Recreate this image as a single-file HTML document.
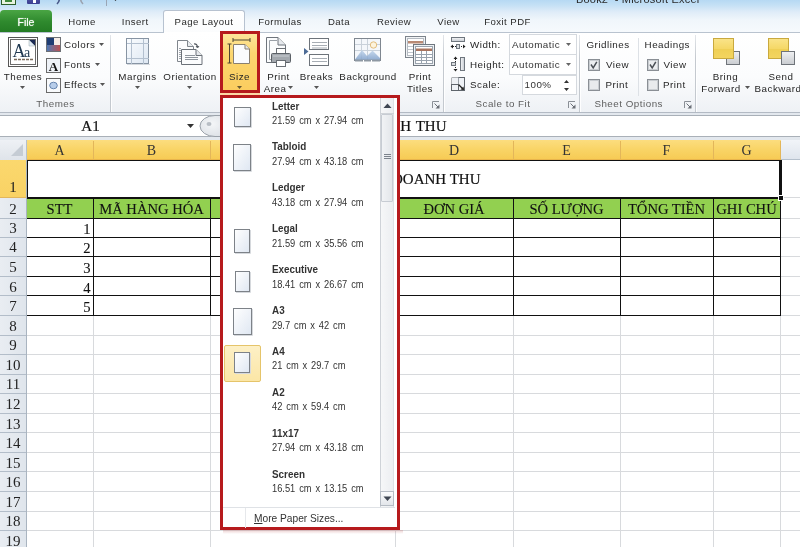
<!DOCTYPE html><html><head><meta charset="utf-8"><style>
html,body{margin:0;padding:0;width:800px;height:547px;overflow:hidden;background:#fff;position:relative}
</style></head><body>
<svg width="0" height="0" style="position:absolute"><defs><linearGradient id="pg" x1="0" y1="0" x2="1" y2="1"><stop offset="0" stop-color="#ffffff"/><stop offset="1" stop-color="#dfe7f2"/></linearGradient></defs></svg>
<div style="position:absolute;left:0;top:0;width:800px;height:547px;overflow:hidden;will-change:transform">
<div style="position:absolute;left:0px;top:0px;width:800px;height:33px;background:linear-gradient(#b6d9f3 0px,#c4e0f5 5px,#dfecf8 12px,#f0f6fb 20px,#f7fafd 33px)"></div><div style="position:absolute;left:1px;top:-6px;width:15px;height:11px;background:#e8f3e0;border:1px solid #2d5f2a;box-sizing:border-box"></div><div style="position:absolute;left:5px;top:-4px;width:7px;height:6px;background:#3e8a3a"></div><div style="position:absolute;left:27px;top:-6px;width:13px;height:10px;background:linear-gradient(#5a5fb0,#3b3f91);border-radius:1px"></div><div style="position:absolute;left:33px;top:0px;width:3px;height:3px;background:#fff"></div><svg style="position:absolute;left:52px;top:-4px" width="10" height="10" viewBox="0 0 10 10"><path d="M6 0 Q9 4 5 8" stroke="#4a5a8a" stroke-width="1.6" fill="none"/></svg><svg style="position:absolute;left:78px;top:-4px" width="10" height="10" viewBox="0 0 10 10"><path d="M4 0 Q1 4 5 8" stroke="#9aa3b0" stroke-width="1.6" fill="none"/></svg><div style="position:absolute;left:106px;top:-2px;width:1px;height:8px;background:#9aa5b5"></div><svg style="position:absolute;left:112px;top:-3px" width="8" height="6" viewBox="0 0 8 6"><path d="M0 0 L7 0 L3.5 4 Z" fill="#222"/></svg><div style="position:absolute;left:576px;top:-11.8px;height:22px;line-height:22px;font-family:'Liberation Sans', sans-serif;font-size:11px;color:#2a2a2a;font-weight:400;white-space:nowrap;letter-spacing:0.2px;">Book2 &nbsp;-&nbsp;Microsoft Excel</div><div style="position:absolute;left:0px;top:10px;width:52px;height:23px;background:linear-gradient(#4aa544,#2f8a2e 50%,#237a23);border-radius:4px 4px 0 0;"></div><div style="position:absolute;left:-124px;top:11.5px;width:300px;height:21.0px;line-height:21.0px;text-align:center;font-family:'Liberation Sans', sans-serif;font-size:10.5px;color:#ffffff;font-weight:400;white-space:nowrap;letter-spacing:0px;text-shadow:0 0 1px #cfe8c8">File</div><div style="position:absolute;left:-68px;top:12.4px;width:300px;height:19.2px;line-height:19.2px;text-align:center;font-family:'Liberation Sans', sans-serif;font-size:9.6px;color:#2a2a2a;font-weight:400;white-space:nowrap;letter-spacing:0.45px;">Home</div><div style="position:absolute;left:-14.800000000000011px;top:12.4px;width:300px;height:19.2px;line-height:19.2px;text-align:center;font-family:'Liberation Sans', sans-serif;font-size:9.6px;color:#2a2a2a;font-weight:400;white-space:nowrap;letter-spacing:0.45px;">Insert</div><div style="position:absolute;left:130px;top:12.4px;width:300px;height:19.2px;line-height:19.2px;text-align:center;font-family:'Liberation Sans', sans-serif;font-size:9.6px;color:#2a2a2a;font-weight:400;white-space:nowrap;letter-spacing:0.45px;">Formulas</div><div style="position:absolute;left:189px;top:12.4px;width:300px;height:19.2px;line-height:19.2px;text-align:center;font-family:'Liberation Sans', sans-serif;font-size:9.6px;color:#2a2a2a;font-weight:400;white-space:nowrap;letter-spacing:0.45px;">Data</div><div style="position:absolute;left:244px;top:12.4px;width:300px;height:19.2px;line-height:19.2px;text-align:center;font-family:'Liberation Sans', sans-serif;font-size:9.6px;color:#2a2a2a;font-weight:400;white-space:nowrap;letter-spacing:0.45px;">Review</div><div style="position:absolute;left:298.5px;top:12.4px;width:300px;height:19.2px;line-height:19.2px;text-align:center;font-family:'Liberation Sans', sans-serif;font-size:9.6px;color:#2a2a2a;font-weight:400;white-space:nowrap;letter-spacing:0.45px;">View</div><div style="position:absolute;left:357.5px;top:12.4px;width:300px;height:19.2px;line-height:19.2px;text-align:center;font-family:'Liberation Sans', sans-serif;font-size:9.6px;color:#2a2a2a;font-weight:400;white-space:nowrap;letter-spacing:0.45px;">Foxit PDF</div><div style="position:absolute;left:163px;top:10px;width:82px;height:24px;background:linear-gradient(#ffffff,#fbfcfd);border:1px solid #b7c2d0;border-bottom:none;border-radius:3px 3px 0 0;box-sizing:border-box"></div><div style="position:absolute;left:54px;top:12.4px;width:300px;height:19.2px;line-height:19.2px;text-align:center;font-family:'Liberation Sans', sans-serif;font-size:9.6px;color:#2a2a2a;font-weight:400;white-space:nowrap;letter-spacing:0.45px;">Page Layout</div><div style="position:absolute;left:0px;top:32px;width:800px;height:81px;background:linear-gradient(#ffffff 0%,#fbfcfd 55%,#eef1f5 100%);border-top:1px solid #b9c3cf;border-bottom:1px solid #b3bac4;box-sizing:border-box"></div><div style="position:absolute;left:164px;top:32px;width:80px;height:2px;background:#fff"></div><div style="position:absolute;left:110px;top:35px;width:1px;height:77px;background:linear-gradient(#e3e6ea,#c4c9cf 30%,#c4c9cf)"></div><div style="position:absolute;left:111px;top:35px;width:1px;height:77px;background:rgba(255,255,255,.9)"></div><div style="position:absolute;left:443px;top:35px;width:1px;height:77px;background:linear-gradient(#e3e6ea,#c4c9cf 30%,#c4c9cf)"></div><div style="position:absolute;left:444px;top:35px;width:1px;height:77px;background:rgba(255,255,255,.9)"></div><div style="position:absolute;left:579px;top:35px;width:1px;height:77px;background:linear-gradient(#e3e6ea,#c4c9cf 30%,#c4c9cf)"></div><div style="position:absolute;left:580px;top:35px;width:1px;height:77px;background:rgba(255,255,255,.9)"></div><div style="position:absolute;left:695px;top:35px;width:1px;height:77px;background:linear-gradient(#e3e6ea,#c4c9cf 30%,#c4c9cf)"></div><div style="position:absolute;left:696px;top:35px;width:1px;height:77px;background:rgba(255,255,255,.9)"></div><svg style="position:absolute;left:8px;top:37px" width="30" height="30" viewBox="0 0 30 30"><rect x="0.5" y="0.5" width="29" height="29" fill="#fff" stroke="#555"/><rect x="2.5" y="2.5" width="25" height="25" fill="#fff" stroke="#6a6a6a"/><path d="M21 3 L27 3 L27 9 Z" fill="#1d2b55"/><path d="M21 3 L21 9 L27 9 Z" fill="#e3ebf5" stroke="#9aa" stroke-width="0.5"/><text x="4.5" y="19.5" font-family="Liberation Serif" font-size="18" fill="#223a52">A</text><text x="16" y="19.5" font-family="Liberation Serif" font-size="14" fill="#223a52">a</text><path d="M6 22.5 h3 M10 22.5 h3 M14 22.5 h3 M18 22.5 h3 M22 22.5 h3" stroke="#7a6a5a" stroke-width="1.5"/></svg><div style="position:absolute;left:-127px;top:66.7px;width:300px;height:19.6px;line-height:19.6px;text-align:center;font-family:'Liberation Sans', sans-serif;font-size:9.8px;color:#262626;font-weight:400;white-space:nowrap;letter-spacing:0.5px;">Themes</div><svg style="position:absolute;left:20px;top:86px" width="6" height="4" viewBox="0 0 6 4"><path d="M0 0 L5 0 L2.5 3 Z" fill="#555"/></svg><svg style="position:absolute;left:46px;top:37px" width="15" height="15" viewBox="0 0 15 15"><defs><linearGradient id="cb" x1="0" y1="0" x2="1" y2="0"><stop offset="0" stop-color="#4a7ab8"/><stop offset="1" stop-color="#c0504d"/></linearGradient></defs><rect x="0.5" y="0.5" width="14" height="14" fill="url(#cb)" stroke="#6d7075"/><rect x="1" y="1" width="7" height="7" fill="#1f3d73"/><rect x="8" y="1" width="6" height="7" fill="#f6ece6"/></svg><div style="position:absolute;left:64px;top:35.0px;height:19.6px;line-height:19.6px;font-family:'Liberation Sans', sans-serif;font-size:9.8px;color:#262626;font-weight:400;white-space:nowrap;letter-spacing:0.5px;">Colors</div><svg style="position:absolute;left:98.5px;top:43px" width="6" height="4" viewBox="0 0 6 4"><path d="M0 0 L5 0 L2.5 3 Z" fill="#555"/></svg><svg style="position:absolute;left:46px;top:58px" width="15" height="15" viewBox="0 0 15 15"><rect x="0.5" y="0.5" width="14" height="14" fill="#eef2f7" stroke="#6a6a6a"/><text x="2.8" y="12.5" font-family="Liberation Serif" font-size="13" font-weight="bold" fill="#111">A</text></svg><div style="position:absolute;left:64px;top:55.2px;height:19.6px;line-height:19.6px;font-family:'Liberation Sans', sans-serif;font-size:9.8px;color:#262626;font-weight:400;white-space:nowrap;letter-spacing:0.5px;">Fonts</div><svg style="position:absolute;left:94.5px;top:63px" width="6" height="4" viewBox="0 0 6 4"><path d="M0 0 L5 0 L2.5 3 Z" fill="#555"/></svg><svg style="position:absolute;left:46px;top:78px" width="15" height="15" viewBox="0 0 15 15"><rect x="0.5" y="0.5" width="14" height="14" fill="#f8fafc" stroke="#6a6a6a"/><ellipse cx="7.5" cy="7.5" rx="3.8" ry="3.3" fill="#b7cdea" stroke="#6786b0"/></svg><div style="position:absolute;left:64px;top:75.2px;height:19.6px;line-height:19.6px;font-family:'Liberation Sans', sans-serif;font-size:9.8px;color:#262626;font-weight:400;white-space:nowrap;letter-spacing:0.5px;">Effects</div><svg style="position:absolute;left:99.5px;top:83px" width="6" height="4" viewBox="0 0 6 4"><path d="M0 0 L5 0 L2.5 3 Z" fill="#555"/></svg><div style="position:absolute;left:-94.5px;top:94.2px;width:300px;height:19.6px;line-height:19.6px;text-align:center;font-family:'Liberation Sans', sans-serif;font-size:9.8px;color:#5e5e5e;font-weight:400;white-space:nowrap;letter-spacing:0.5px;">Themes</div><svg style="position:absolute;left:126px;top:38px" width="24" height="27" viewBox="0 0 24 27"><defs><linearGradient id="mg" x1="0" y1="0" x2="1" y2="1"><stop offset="0" stop-color="#fbfdff"/><stop offset="1" stop-color="#dde7f2"/></linearGradient></defs><rect x="0.5" y="0.5" width="22" height="25" fill="url(#mg)" stroke="#8794a3"/><path d="M5.5 1 V26 M17.5 1 V26 M1 5.5 H23 M1 20.5 H23" stroke="#b3c0cf"/><rect x="1" y="26" width="23" height="1" fill="#d5d9de"/></svg><div style="position:absolute;left:-12.5px;top:66.5px;width:300px;height:19.6px;line-height:19.6px;text-align:center;font-family:'Liberation Sans', sans-serif;font-size:9.8px;color:#262626;font-weight:400;white-space:nowrap;letter-spacing:0.5px;">Margins</div><svg style="position:absolute;left:135px;top:86px" width="6" height="4" viewBox="0 0 6 4"><path d="M0 0 L5 0 L2.5 3 Z" fill="#555"/></svg><svg style="position:absolute;left:176px;top:39px" width="28" height="27" viewBox="0 0 28 27"><path d="M1.5 1.5 H11.5 L17.5 7.5 V22.5 H1.5 Z" fill="#fdfdfe" stroke="#80868d"/><path d="M11.5 1.5 V7.5 H17.5" fill="#e9ecef" stroke="#80868d"/><path d="M3 9.5 H5 M3 11.5 H5 M3 13.5 H5 M3 15.5 H5 M3 17.5 H5 M3 19.5 H5" stroke="#a0a6ad"/><path d="M5.5 10.5 H20 L26 16.5 V25.5 H5.5 Z" fill="#fbfcfd" stroke="#6b7178"/><path d="M20 10.5 V16.5 H26" fill="#e6e9ed" stroke="#6b7178"/><path d="M9 16.5 H19 M9 18.5 H22 M9 20.5 H22" stroke="#8e959d"/><path d="M18 5 Q21 4.5 21.5 8" stroke="#50565d" stroke-width="1.2" fill="none"/><path d="M20 7 L21.5 9 L23 7" stroke="#50565d" fill="none"/></svg><div style="position:absolute;left:40px;top:66.5px;width:300px;height:19.6px;line-height:19.6px;text-align:center;font-family:'Liberation Sans', sans-serif;font-size:9.8px;color:#262626;font-weight:400;white-space:nowrap;letter-spacing:0.5px;">Orientation</div><svg style="position:absolute;left:186.5px;top:86px" width="6" height="4" viewBox="0 0 6 4"><path d="M0 0 L5 0 L2.5 3 Z" fill="#555"/></svg><svg style="position:absolute;left:265px;top:36px" width="28" height="32" viewBox="0 0 28 32"><path d="M1.5 1.5 H13 L20.5 9 V26.5 H1.5 Z" fill="#fbfcfd" stroke="#6f757c"/><path d="M13 1.5 V9 H20.5" fill="#e6e9ed" stroke="#6f757c"/><path d="M4.5 4.5 H12 M4.5 4.5 V23.5 H10" stroke="#9aa0a7" fill="none"/><rect x="11.5" y="12.5" width="9" height="6" fill="#fff" stroke="#6a6f75"/><rect x="6.5" y="17.5" width="19" height="9" rx="1" fill="#a3a8ae" stroke="#5b6066"/><path d="M8 20 H24" stroke="#c9cdd2"/><rect x="11.5" y="24.5" width="9" height="6" fill="#fff" stroke="#6a6f75"/></svg><div style="position:absolute;left:128.5px;top:66.5px;width:300px;height:19.6px;line-height:19.6px;text-align:center;font-family:'Liberation Sans', sans-serif;font-size:9.8px;color:#262626;font-weight:400;white-space:nowrap;letter-spacing:0.5px;">Print</div><div style="position:absolute;left:125px;top:78.8px;width:300px;height:19.6px;line-height:19.6px;text-align:center;font-family:'Liberation Sans', sans-serif;font-size:9.8px;color:#262626;font-weight:400;white-space:nowrap;letter-spacing:0.5px;">Area</div><svg style="position:absolute;left:288px;top:86px" width="6" height="4" viewBox="0 0 6 4"><path d="M0 0 L5 0 L2.5 3 Z" fill="#555"/></svg><svg style="position:absolute;left:301px;top:37px" width="28" height="30" viewBox="0 0 28 30"><path d="M3 11 L7.5 14.5 L3 18 Z" fill="#4d6b96"/><rect x="8.5" y="1.5" width="19" height="11" fill="#fff" stroke="#6d737a"/><path d="M11 5.5 H26 M11 8.5 H26 M11 11 H26" stroke="#a7adb4"/><rect x="8.5" y="17.5" width="19" height="11" fill="#fff" stroke="#6d737a"/><path d="M11 21.5 H26 M11 24.5 H26" stroke="#a7adb4"/></svg><div style="position:absolute;left:166.5px;top:66.5px;width:300px;height:19.6px;line-height:19.6px;text-align:center;font-family:'Liberation Sans', sans-serif;font-size:9.8px;color:#262626;font-weight:400;white-space:nowrap;letter-spacing:0.5px;">Breaks</div><svg style="position:absolute;left:314px;top:86px" width="6" height="4" viewBox="0 0 6 4"><path d="M0 0 L5 0 L2.5 3 Z" fill="#555"/></svg><svg style="position:absolute;left:354px;top:38px" width="28" height="26" viewBox="0 0 28 26"><defs><linearGradient id="bgm" x1="0" y1="0" x2="0" y2="1"><stop offset="0" stop-color="#c2d6ec"/><stop offset="1" stop-color="#7f9fc9"/></linearGradient></defs><rect x="0.5" y="0.5" width="26" height="22" fill="#f4f7fb" stroke="#7f8790"/><path d="M1 6.5 H26 M1 12.5 H26 M7.5 1 V22 M13.5 1 V22" stroke="#c9d1da"/><circle cx="19.5" cy="7" r="3.2" fill="#fdf3dc" stroke="#e2bd7e"/><path d="M1 21.5 L8 12 L13 18 L18.5 12.5 L26 20 V22 H1 Z" fill="url(#bgm)" opacity="0.85"/><path d="M1 22.5 H26" stroke="#8e98a3" stroke-width="2"/><path d="M9.5 22 V24 M17.5 22 V24" stroke="#fff"/></svg><div style="position:absolute;left:218px;top:66.5px;width:300px;height:19.6px;line-height:19.6px;text-align:center;font-family:'Liberation Sans', sans-serif;font-size:9.8px;color:#262626;font-weight:400;white-space:nowrap;letter-spacing:0.5px;">Background</div><svg style="position:absolute;left:405px;top:36px" width="30" height="31" viewBox="0 0 30 31"><rect x="0.5" y="0.5" width="20" height="21" fill="#f2f4f6" stroke="#7d848c"/><rect x="2.5" y="2.5" width="16" height="17" fill="#fff" stroke="#b5bbc2"/><rect x="3" y="5" width="15" height="2.5" fill="#b98a74"/><path d="M3 10.5 H18 M3 13.5 H18 M3 16.5 H18" stroke="#c0c6cd"/><rect x="8.5" y="8.5" width="21" height="21" fill="#eef1f4" stroke="#6f777f"/><rect x="10.5" y="10.5" width="17" height="17" fill="#fff" stroke="#9aa3ad"/><rect x="11" y="12.5" width="16" height="2.5" fill="#a9745e"/><path d="M11 18.5 H27 M11 21.5 H27 M11 24.5 H27 M16.5 15 V27 M21.5 15 V27" stroke="#98a2ad"/></svg><div style="position:absolute;left:270px;top:66.5px;width:300px;height:19.6px;line-height:19.6px;text-align:center;font-family:'Liberation Sans', sans-serif;font-size:9.8px;color:#262626;font-weight:400;white-space:nowrap;letter-spacing:0.5px;">Print</div><div style="position:absolute;left:270px;top:78.8px;width:300px;height:19.6px;line-height:19.6px;text-align:center;font-family:'Liberation Sans', sans-serif;font-size:9.8px;color:#262626;font-weight:400;white-space:nowrap;letter-spacing:0.5px;">Titles</div><svg style="position:absolute;left:432px;top:101px" width="8" height="8" viewBox="0 0 8 8"><path d="M0.5 7 V0.5 H7" stroke="#8a8f96" fill="none"/><path d="M2.5 2.5 L6 6" stroke="#6a6f76" fill="none"/><path d="M7.5 3.5 V7.5 H3.5 Z" fill="#6a6f76"/></svg><svg style="position:absolute;left:450px;top:37px" width="16" height="14" viewBox="0 0 16 14"><defs><linearGradient id="wb" x1="0" y1="0" x2="0" y2="1"><stop offset="0" stop-color="#f7f8fa"/><stop offset="1" stop-color="#c3c8ce"/></linearGradient></defs><rect x="1.5" y="0.5" width="13" height="4" fill="url(#wb)" stroke="#6f767e"/><path d="M1 9.5 H15" stroke="#222" stroke-dasharray="1 1"/><path d="M0.5 9.5 L3 7.5 V11.5 Z M15.5 9.5 L13 7.5 V11.5 Z" fill="#222"/><rect x="6.5" y="7.5" width="3" height="4" fill="#d9dcdf" stroke="#6f767e"/></svg><div style="position:absolute;left:470px;top:35.099999999999994px;height:19.6px;line-height:19.6px;font-family:'Liberation Sans', sans-serif;font-size:9.8px;color:#262626;font-weight:400;white-space:nowrap;letter-spacing:0.5px;">Width:</div><svg style="position:absolute;left:450px;top:56px" width="16" height="16" viewBox="0 0 16 16"><defs><linearGradient id="hb" x1="0" y1="0" x2="1" y2="0"><stop offset="0" stop-color="#f7f8fa"/><stop offset="1" stop-color="#c3c8ce"/></linearGradient></defs><rect x="10.5" y="1.5" width="4" height="13" fill="url(#hb)" stroke="#6f767e"/><path d="M5.5 1 V15" stroke="#222" stroke-dasharray="1 1"/><path d="M5.5 0.5 L3.5 3 H7.5 Z M5.5 15.5 L3.5 13 H7.5 Z" fill="#222"/><rect x="1.5" y="6.5" width="4" height="3" fill="#d9dcdf" stroke="#6f767e"/></svg><div style="position:absolute;left:470px;top:54.8px;height:19.6px;line-height:19.6px;font-family:'Liberation Sans', sans-serif;font-size:9.8px;color:#262626;font-weight:400;white-space:nowrap;letter-spacing:0.5px;">Height:</div><svg style="position:absolute;left:450px;top:76px" width="16" height="16" viewBox="0 0 16 16"><rect x="1.5" y="1.5" width="13" height="13" fill="#eef1f5" stroke="#5f656c"/><path d="M1.5 1.5 H8 M1.5 1.5 V8" stroke="#fff" stroke-dasharray="1 1"/><path d="M1.5 8.5 H8.5 V14.5" stroke="#5f656c" fill="none"/><path d="M8.5 1.5 V8.5" stroke="#9aa0a7"/><path d="M8.5 8.5 L13.5 13.5" stroke="#222" stroke-width="1.2"/><path d="M14 14 L10.5 13.5 L13.5 10.5 Z" fill="#222"/></svg><div style="position:absolute;left:470px;top:75.4px;height:19.6px;line-height:19.6px;font-family:'Liberation Sans', sans-serif;font-size:9.8px;color:#262626;font-weight:400;white-space:nowrap;letter-spacing:0.5px;">Scale:</div><div style="position:absolute;left:509px;top:34px;width:68px;height:21px;background:#fff;border:1px solid #d5d9de;box-sizing:border-box"></div><div style="position:absolute;left:509px;top:54px;width:68px;height:21px;background:#fff;border:1px solid #d5d9de;box-sizing:border-box"></div><div style="position:absolute;left:522px;top:75px;width:55px;height:20px;background:#fff;border:1px solid #d5d9de;box-sizing:border-box"></div><div style="position:absolute;left:512px;top:35.099999999999994px;height:19.6px;line-height:19.6px;font-family:'Liberation Sans', sans-serif;font-size:9.8px;color:#333;font-weight:400;white-space:nowrap;letter-spacing:0.5px;">Automatic</div><div style="position:absolute;left:512px;top:54.8px;height:19.6px;line-height:19.6px;font-family:'Liberation Sans', sans-serif;font-size:9.8px;color:#333;font-weight:400;white-space:nowrap;letter-spacing:0.5px;">Automatic</div><svg style="position:absolute;left:566px;top:43px" width="6" height="4" viewBox="0 0 6 4"><path d="M0 0 L5 0 L2.5 3 Z" fill="#666"/></svg><svg style="position:absolute;left:566px;top:63px" width="6" height="4" viewBox="0 0 6 4"><path d="M0 0 L5 0 L2.5 3 Z" fill="#666"/></svg><div style="position:absolute;left:524.5px;top:75.4px;height:19.6px;line-height:19.6px;font-family:'Liberation Sans', sans-serif;font-size:9.8px;color:#333;font-weight:400;white-space:nowrap;letter-spacing:0.5px;">100%</div><svg style="position:absolute;left:564px;top:80px" width="6" height="12" viewBox="0 0 6 12"><path d="M0 3 L5 3 L2.5 0 Z M0 8 L5 8 L2.5 11 Z" fill="#333"/></svg><div style="position:absolute;left:353px;top:94.2px;width:300px;height:19.6px;line-height:19.6px;text-align:center;font-family:'Liberation Sans', sans-serif;font-size:9.8px;color:#5e5e5e;font-weight:400;white-space:nowrap;letter-spacing:0.5px;">Scale to Fit</div><svg style="position:absolute;left:568px;top:101px" width="8" height="8" viewBox="0 0 8 8"><path d="M0.5 7 V0.5 H7" stroke="#8a8f96" fill="none"/><path d="M2.5 2.5 L6 6" stroke="#6a6f76" fill="none"/><path d="M7.5 3.5 V7.5 H3.5 Z" fill="#6a6f76"/></svg><div style="position:absolute;left:586.5px;top:34.7px;height:19.6px;line-height:19.6px;font-family:'Liberation Sans', sans-serif;font-size:9.8px;color:#262626;font-weight:400;white-space:nowrap;letter-spacing:0.5px;">Gridlines</div><div style="position:absolute;left:644.6px;top:34.7px;height:19.6px;line-height:19.6px;font-family:'Liberation Sans', sans-serif;font-size:9.8px;color:#262626;font-weight:400;white-space:nowrap;letter-spacing:0.5px;">Headings</div><div style="position:absolute;left:638px;top:38px;width:1px;height:58px;background:#dde1e6"></div><svg style="position:absolute;left:588px;top:59px" width="12" height="12" viewBox="0 0 12 12"><rect x="0.5" y="0.5" width="11" height="11" fill="#fff" stroke="#8a8f95"/><rect x="1.5" y="1.5" width="9" height="9" fill="#eceef0" stroke="#c9cdd1"/><path d="M3 5.5 L5.2 8.8 L8.8 2.8" stroke="#4a4f55" stroke-width="1.5" fill="none"/></svg><svg style="position:absolute;left:588px;top:79px" width="12" height="12" viewBox="0 0 12 12"><rect x="0.5" y="0.5" width="11" height="11" fill="#fff" stroke="#8a8f95"/><rect x="1.5" y="1.5" width="9" height="9" fill="#e9ebed" stroke="#c9cdd1"/></svg><svg style="position:absolute;left:646.5px;top:59px" width="12" height="12" viewBox="0 0 12 12"><rect x="0.5" y="0.5" width="11" height="11" fill="#fff" stroke="#8a8f95"/><rect x="1.5" y="1.5" width="9" height="9" fill="#eceef0" stroke="#c9cdd1"/><path d="M3 5.5 L5.2 8.8 L8.8 2.8" stroke="#4a4f55" stroke-width="1.5" fill="none"/></svg><svg style="position:absolute;left:646.5px;top:79px" width="12" height="12" viewBox="0 0 12 12"><rect x="0.5" y="0.5" width="11" height="11" fill="#fff" stroke="#8a8f95"/><rect x="1.5" y="1.5" width="9" height="9" fill="#e9ebed" stroke="#c9cdd1"/></svg><div style="position:absolute;left:606px;top:55.2px;height:19.6px;line-height:19.6px;font-family:'Liberation Sans', sans-serif;font-size:9.8px;color:#262626;font-weight:400;white-space:nowrap;letter-spacing:0.5px;">View</div><div style="position:absolute;left:605.5px;top:75.2px;height:19.6px;line-height:19.6px;font-family:'Liberation Sans', sans-serif;font-size:9.8px;color:#262626;font-weight:400;white-space:nowrap;letter-spacing:0.5px;">Print</div><div style="position:absolute;left:663.5px;top:55.2px;height:19.6px;line-height:19.6px;font-family:'Liberation Sans', sans-serif;font-size:9.8px;color:#262626;font-weight:400;white-space:nowrap;letter-spacing:0.5px;">View</div><div style="position:absolute;left:663px;top:75.2px;height:19.6px;line-height:19.6px;font-family:'Liberation Sans', sans-serif;font-size:9.8px;color:#262626;font-weight:400;white-space:nowrap;letter-spacing:0.5px;">Print</div><div style="position:absolute;left:478.70000000000005px;top:94.2px;width:300px;height:19.6px;line-height:19.6px;text-align:center;font-family:'Liberation Sans', sans-serif;font-size:9.8px;color:#5e5e5e;font-weight:400;white-space:nowrap;letter-spacing:0.5px;">Sheet Options</div><svg style="position:absolute;left:684px;top:101px" width="8" height="8" viewBox="0 0 8 8"><path d="M0.5 7 V0.5 H7" stroke="#8a8f96" fill="none"/><path d="M2.5 2.5 L6 6" stroke="#6a6f76" fill="none"/><path d="M7.5 3.5 V7.5 H3.5 Z" fill="#6a6f76"/></svg><svg style="position:absolute;left:713px;top:38px" width="28" height="28" viewBox="0 0 28 28"><defs><linearGradient id="yl" x1="0" y1="0" x2="0" y2="1"><stop offset="0" stop-color="#fae48a"/><stop offset="0.5" stop-color="#f5d867"/><stop offset="0.52" stop-color="#efcf55"/><stop offset="1" stop-color="#f3d560"/></linearGradient><linearGradient id="gr" x1="0" y1="0" x2="0" y2="1"><stop offset="0" stop-color="#f0f1f3"/><stop offset="1" stop-color="#c9ccd0"/></linearGradient></defs><rect x="13.5" y="13.5" width="13" height="13" fill="url(#gr)" stroke="#6f747a"/><rect x="0.5" y="0.5" width="20" height="20" fill="url(#yl)" stroke="#c9a93e"/></svg><svg style="position:absolute;left:768px;top:38px" width="28" height="28" viewBox="0 0 28 28"><rect x="0.5" y="0.5" width="20" height="20" fill="url(#yl)" stroke="#c9a93e"/><rect x="13.5" y="13.5" width="13" height="13" fill="url(#gr)" stroke="#6f747a"/></svg><div style="position:absolute;left:575.5px;top:66.5px;width:300px;height:19.6px;line-height:19.6px;text-align:center;font-family:'Liberation Sans', sans-serif;font-size:9.8px;color:#262626;font-weight:400;white-space:nowrap;letter-spacing:0.5px;">Bring</div><div style="position:absolute;left:571px;top:78.60000000000001px;width:300px;height:19.6px;line-height:19.6px;text-align:center;font-family:'Liberation Sans', sans-serif;font-size:9.8px;color:#262626;font-weight:400;white-space:nowrap;letter-spacing:0.5px;">Forward</div><svg style="position:absolute;left:745px;top:86px" width="6" height="4" viewBox="0 0 6 4"><path d="M0 0 L5 0 L2.5 3 Z" fill="#555"/></svg><div style="position:absolute;left:631px;top:66.5px;width:300px;height:19.6px;line-height:19.6px;text-align:center;font-family:'Liberation Sans', sans-serif;font-size:9.8px;color:#262626;font-weight:400;white-space:nowrap;letter-spacing:0.5px;">Send</div><div style="position:absolute;left:754.5px;top:78.60000000000001px;height:19.6px;line-height:19.6px;font-family:'Liberation Sans', sans-serif;font-size:9.8px;color:#262626;font-weight:400;white-space:nowrap;letter-spacing:0.5px;">Backward</div><div style="position:absolute;left:0px;top:112px;width:800px;height:28px;background:#e3e8ee"></div><div style="position:absolute;left:0px;top:115px;width:800px;height:22px;background:#fff;border-top:1px solid #a9b0b8;border-bottom:1px solid #a9b0b8;box-sizing:border-box"></div><div style="position:absolute;left:0px;top:112px;width:800px;height:1px;background:#b3bac4"></div><div style="position:absolute;left:-59.5px;top:111px;width:300px;height:30px;line-height:30px;text-align:center;font-family:'Liberation Serif', serif;font-size:15px;color:#111;font-weight:400;white-space:nowrap;letter-spacing:0px;-webkit-text-stroke:0.2px #111">A1</div><svg style="position:absolute;left:187px;top:124px" width="8" height="5" viewBox="0 0 8 5"><path d="M0 0 L7 0 L3.5 4 Z" fill="#333"/></svg><svg style="position:absolute;left:197px;top:115px" width="30" height="22" viewBox="0 0 30 22"><defs><radialGradient id="hd" cx="0.45" cy="0.4" r="0.6"><stop offset="0" stop-color="#f4f6f8"/><stop offset="1" stop-color="#dfe3e8"/></radialGradient></defs><path d="M18 0.5 A15 10.5 0 0 0 18 21.5 H30 V0.5 Z" fill="url(#hd)" stroke="#9aa1a9"/><ellipse cx="12" cy="9" rx="2.5" ry="2" fill="#b8bec5"/></svg><div style="position:absolute;left:146.5px;width:300px;text-align:right;top:111px;height:30px;line-height:30px;font-family:'Liberation Serif', serif;font-size:15px;color:#111;font-weight:400;white-space:nowrap;letter-spacing:0px;word-spacing:1px;-webkit-text-stroke:0.2px #111">BẢNG DOANH THU</div><div style="position:absolute;left:0px;top:140px;width:800px;height:20px;background:linear-gradient(#f1f4f8,#dfe5ed);border-bottom:1px solid #b5c0cc;box-sizing:border-box"></div><div style="position:absolute;left:26px;top:140px;width:755px;height:20px;background:linear-gradient(#fcdd7e,#f9d466 50%,#f7cb55);border-bottom:1px solid #e9b54c;box-sizing:border-box"></div><div style="position:absolute;left:0px;top:140px;width:26px;height:20px;background:linear-gradient(#eef1f5,#dfe4ea)"></div><svg style="position:absolute;left:11px;top:143px" width="13" height="14" viewBox="0 0 13 14"><path d="M12 1 L12 13 L0 13 Z" fill="#c5ccd4"/></svg><div style="position:absolute;left:93px;top:141px;width:1px;height:18px;background:#e3b65a"></div><div style="position:absolute;left:210px;top:141px;width:1px;height:18px;background:#e3b65a"></div><div style="position:absolute;left:395px;top:141px;width:1px;height:18px;background:#e3b65a"></div><div style="position:absolute;left:513px;top:141px;width:1px;height:18px;background:#e3b65a"></div><div style="position:absolute;left:620px;top:141px;width:1px;height:18px;background:#e3b65a"></div><div style="position:absolute;left:713px;top:141px;width:1px;height:18px;background:#e3b65a"></div><div style="position:absolute;left:780px;top:141px;width:1px;height:18px;background:#e3b65a"></div><div style="position:absolute;left:26px;top:140px;width:1px;height:20px;background:#b5c0cc"></div><div style="position:absolute;left:-90.5px;top:136.5px;width:300px;height:28px;line-height:28px;text-align:center;font-family:'Liberation Serif', serif;font-size:14px;color:#333;font-weight:400;white-space:nowrap;letter-spacing:0px;">A</div><div style="position:absolute;left:1.5px;top:136.5px;width:300px;height:28px;line-height:28px;text-align:center;font-family:'Liberation Serif', serif;font-size:14px;color:#333;font-weight:400;white-space:nowrap;letter-spacing:0px;">B</div><div style="position:absolute;left:152.5px;top:136.5px;width:300px;height:28px;line-height:28px;text-align:center;font-family:'Liberation Serif', serif;font-size:14px;color:#333;font-weight:400;white-space:nowrap;letter-spacing:0px;">C</div><div style="position:absolute;left:304.0px;top:136.5px;width:300px;height:28px;line-height:28px;text-align:center;font-family:'Liberation Serif', serif;font-size:14px;color:#333;font-weight:400;white-space:nowrap;letter-spacing:0px;">D</div><div style="position:absolute;left:416.5px;top:136.5px;width:300px;height:28px;line-height:28px;text-align:center;font-family:'Liberation Serif', serif;font-size:14px;color:#333;font-weight:400;white-space:nowrap;letter-spacing:0px;">E</div><div style="position:absolute;left:516.5px;top:136.5px;width:300px;height:28px;line-height:28px;text-align:center;font-family:'Liberation Serif', serif;font-size:14px;color:#333;font-weight:400;white-space:nowrap;letter-spacing:0px;">F</div><div style="position:absolute;left:596.5px;top:136.5px;width:300px;height:28px;line-height:28px;text-align:center;font-family:'Liberation Serif', serif;font-size:14px;color:#333;font-weight:400;white-space:nowrap;letter-spacing:0px;">G</div><div style="position:absolute;left:0px;top:160px;width:26px;height:387px;background:linear-gradient(90deg,#e9edf2,#dfe5ec)"></div><div style="position:absolute;left:26px;top:160px;width:1px;height:387px;background:#a9b4c0"></div><div style="position:absolute;left:27px;top:160px;width:773px;height:387px;background:#fff"></div><div style="position:absolute;left:0px;top:160px;width:26px;height:38px;background:linear-gradient(#fbd86e,#f9d264)"></div><div style="position:absolute;left:0px;top:197px;width:26px;height:1px;background:#e2b65c"></div><div style="position:absolute;left:0px;top:218px;width:26px;height:1px;background:#b3bdc9"></div><div style="position:absolute;left:27px;top:218px;width:773px;height:1px;background:#d8dadd"></div><div style="position:absolute;left:0px;top:237px;width:26px;height:1px;background:#b3bdc9"></div><div style="position:absolute;left:27px;top:237px;width:773px;height:1px;background:#d8dadd"></div><div style="position:absolute;left:0px;top:256px;width:26px;height:1px;background:#b3bdc9"></div><div style="position:absolute;left:27px;top:256px;width:773px;height:1px;background:#d8dadd"></div><div style="position:absolute;left:0px;top:276px;width:26px;height:1px;background:#b3bdc9"></div><div style="position:absolute;left:27px;top:276px;width:773px;height:1px;background:#d8dadd"></div><div style="position:absolute;left:0px;top:295px;width:26px;height:1px;background:#b3bdc9"></div><div style="position:absolute;left:27px;top:295px;width:773px;height:1px;background:#d8dadd"></div><div style="position:absolute;left:0px;top:315px;width:26px;height:1px;background:#b3bdc9"></div><div style="position:absolute;left:27px;top:315px;width:773px;height:1px;background:#d8dadd"></div><div style="position:absolute;left:0px;top:335px;width:26px;height:1px;background:#b3bdc9"></div><div style="position:absolute;left:27px;top:335px;width:773px;height:1px;background:#d8dadd"></div><div style="position:absolute;left:0px;top:354px;width:26px;height:1px;background:#b3bdc9"></div><div style="position:absolute;left:27px;top:354px;width:773px;height:1px;background:#d8dadd"></div><div style="position:absolute;left:0px;top:374px;width:26px;height:1px;background:#b3bdc9"></div><div style="position:absolute;left:27px;top:374px;width:773px;height:1px;background:#d8dadd"></div><div style="position:absolute;left:0px;top:393px;width:26px;height:1px;background:#b3bdc9"></div><div style="position:absolute;left:27px;top:393px;width:773px;height:1px;background:#d8dadd"></div><div style="position:absolute;left:0px;top:413px;width:26px;height:1px;background:#b3bdc9"></div><div style="position:absolute;left:27px;top:413px;width:773px;height:1px;background:#d8dadd"></div><div style="position:absolute;left:0px;top:432px;width:26px;height:1px;background:#b3bdc9"></div><div style="position:absolute;left:27px;top:432px;width:773px;height:1px;background:#d8dadd"></div><div style="position:absolute;left:0px;top:452px;width:26px;height:1px;background:#b3bdc9"></div><div style="position:absolute;left:27px;top:452px;width:773px;height:1px;background:#d8dadd"></div><div style="position:absolute;left:0px;top:471px;width:26px;height:1px;background:#b3bdc9"></div><div style="position:absolute;left:27px;top:471px;width:773px;height:1px;background:#d8dadd"></div><div style="position:absolute;left:0px;top:491px;width:26px;height:1px;background:#b3bdc9"></div><div style="position:absolute;left:27px;top:491px;width:773px;height:1px;background:#d8dadd"></div><div style="position:absolute;left:0px;top:511px;width:26px;height:1px;background:#b3bdc9"></div><div style="position:absolute;left:27px;top:511px;width:773px;height:1px;background:#d8dadd"></div><div style="position:absolute;left:0px;top:530px;width:26px;height:1px;background:#b3bdc9"></div><div style="position:absolute;left:27px;top:530px;width:773px;height:1px;background:#d8dadd"></div><div style="position:absolute;left:0px;top:550px;width:26px;height:1px;background:#b3bdc9"></div><div style="position:absolute;left:27px;top:550px;width:773px;height:1px;background:#d8dadd"></div><div style="position:absolute;left:0px;top:569px;width:26px;height:1px;background:#b3bdc9"></div><div style="position:absolute;left:27px;top:569px;width:773px;height:1px;background:#d8dadd"></div><div style="position:absolute;left:93px;top:198px;width:1px;height:349px;background:#d8dadd"></div><div style="position:absolute;left:210px;top:198px;width:1px;height:349px;background:#d8dadd"></div><div style="position:absolute;left:395px;top:198px;width:1px;height:349px;background:#d8dadd"></div><div style="position:absolute;left:513px;top:198px;width:1px;height:349px;background:#d8dadd"></div><div style="position:absolute;left:620px;top:198px;width:1px;height:349px;background:#d8dadd"></div><div style="position:absolute;left:713px;top:198px;width:1px;height:349px;background:#d8dadd"></div><div style="position:absolute;left:780px;top:198px;width:1px;height:349px;background:#d8dadd"></div><div style="position:absolute;left:781px;top:197px;width:19px;height:1px;background:#d8dadd"></div><div style="position:absolute;left:-137px;top:172px;width:300px;height:30px;line-height:30px;text-align:center;font-family:'Liberation Serif', serif;font-size:15px;color:#222;font-weight:400;white-space:nowrap;letter-spacing:0px;-webkit-text-stroke:0px #222">1</div><div style="position:absolute;left:-137px;top:193.72px;width:300px;height:30px;line-height:30px;text-align:center;font-family:'Liberation Serif', serif;font-size:15px;color:#222;font-weight:400;white-space:nowrap;letter-spacing:0px;-webkit-text-stroke:0px #222">2</div><div style="position:absolute;left:-137px;top:212.92px;width:300px;height:30px;line-height:30px;text-align:center;font-family:'Liberation Serif', serif;font-size:15px;color:#222;font-weight:400;white-space:nowrap;letter-spacing:0px;-webkit-text-stroke:0px #222">3</div><div style="position:absolute;left:-137px;top:232.48px;width:300px;height:30px;line-height:30px;text-align:center;font-family:'Liberation Serif', serif;font-size:15px;color:#222;font-weight:400;white-space:nowrap;letter-spacing:0px;-webkit-text-stroke:0px #222">4</div><div style="position:absolute;left:-137px;top:252.04000000000002px;width:300px;height:30px;line-height:30px;text-align:center;font-family:'Liberation Serif', serif;font-size:15px;color:#222;font-weight:400;white-space:nowrap;letter-spacing:0px;-webkit-text-stroke:0px #222">5</div><div style="position:absolute;left:-137px;top:271.6px;width:300px;height:30px;line-height:30px;text-align:center;font-family:'Liberation Serif', serif;font-size:15px;color:#222;font-weight:400;white-space:nowrap;letter-spacing:0px;-webkit-text-stroke:0px #222">6</div><div style="position:absolute;left:-137px;top:291.16px;width:300px;height:30px;line-height:30px;text-align:center;font-family:'Liberation Serif', serif;font-size:15px;color:#222;font-weight:400;white-space:nowrap;letter-spacing:0px;-webkit-text-stroke:0px #222">7</div><div style="position:absolute;left:-137px;top:310.72px;width:300px;height:30px;line-height:30px;text-align:center;font-family:'Liberation Serif', serif;font-size:15px;color:#222;font-weight:400;white-space:nowrap;letter-spacing:0px;-webkit-text-stroke:0px #222">8</div><div style="position:absolute;left:-137px;top:330.28px;width:300px;height:30px;line-height:30px;text-align:center;font-family:'Liberation Serif', serif;font-size:15px;color:#222;font-weight:400;white-space:nowrap;letter-spacing:0px;-webkit-text-stroke:0px #222">9</div><div style="position:absolute;left:-137px;top:349.84000000000003px;width:300px;height:30px;line-height:30px;text-align:center;font-family:'Liberation Serif', serif;font-size:15px;color:#222;font-weight:400;white-space:nowrap;letter-spacing:0px;-webkit-text-stroke:0px #222">10</div><div style="position:absolute;left:-137px;top:369.4px;width:300px;height:30px;line-height:30px;text-align:center;font-family:'Liberation Serif', serif;font-size:15px;color:#222;font-weight:400;white-space:nowrap;letter-spacing:0px;-webkit-text-stroke:0px #222">11</div><div style="position:absolute;left:-137px;top:388.96000000000004px;width:300px;height:30px;line-height:30px;text-align:center;font-family:'Liberation Serif', serif;font-size:15px;color:#222;font-weight:400;white-space:nowrap;letter-spacing:0px;-webkit-text-stroke:0px #222">12</div><div style="position:absolute;left:-137px;top:408.52px;width:300px;height:30px;line-height:30px;text-align:center;font-family:'Liberation Serif', serif;font-size:15px;color:#222;font-weight:400;white-space:nowrap;letter-spacing:0px;-webkit-text-stroke:0px #222">13</div><div style="position:absolute;left:-137px;top:428.08000000000004px;width:300px;height:30px;line-height:30px;text-align:center;font-family:'Liberation Serif', serif;font-size:15px;color:#222;font-weight:400;white-space:nowrap;letter-spacing:0px;-webkit-text-stroke:0px #222">14</div><div style="position:absolute;left:-137px;top:447.64px;width:300px;height:30px;line-height:30px;text-align:center;font-family:'Liberation Serif', serif;font-size:15px;color:#222;font-weight:400;white-space:nowrap;letter-spacing:0px;-webkit-text-stroke:0px #222">15</div><div style="position:absolute;left:-137px;top:467.2px;width:300px;height:30px;line-height:30px;text-align:center;font-family:'Liberation Serif', serif;font-size:15px;color:#222;font-weight:400;white-space:nowrap;letter-spacing:0px;-webkit-text-stroke:0px #222">16</div><div style="position:absolute;left:-137px;top:486.76px;width:300px;height:30px;line-height:30px;text-align:center;font-family:'Liberation Serif', serif;font-size:15px;color:#222;font-weight:400;white-space:nowrap;letter-spacing:0px;-webkit-text-stroke:0px #222">17</div><div style="position:absolute;left:-137px;top:506.31999999999994px;width:300px;height:30px;line-height:30px;text-align:center;font-family:'Liberation Serif', serif;font-size:15px;color:#222;font-weight:400;white-space:nowrap;letter-spacing:0px;-webkit-text-stroke:0px #222">18</div><div style="position:absolute;left:-137px;top:525.88px;width:300px;height:30px;line-height:30px;text-align:center;font-family:'Liberation Serif', serif;font-size:15px;color:#222;font-weight:400;white-space:nowrap;letter-spacing:0px;-webkit-text-stroke:0px #222">19</div><div style="position:absolute;left:27px;top:198px;width:754px;height:20px;background:#92d050"></div><div style="position:absolute;left:27px;top:198px;width:754px;height:1px;background:#111"></div><div style="position:absolute;left:27px;top:218px;width:754px;height:1px;background:#111"></div><div style="position:absolute;left:27px;top:237px;width:754px;height:1px;background:#111"></div><div style="position:absolute;left:27px;top:256px;width:754px;height:1px;background:#111"></div><div style="position:absolute;left:27px;top:276px;width:754px;height:1px;background:#111"></div><div style="position:absolute;left:27px;top:295px;width:754px;height:1px;background:#111"></div><div style="position:absolute;left:27px;top:315px;width:754px;height:1px;background:#111"></div><div style="position:absolute;left:93px;top:198px;width:1px;height:117px;background:#111"></div><div style="position:absolute;left:210px;top:198px;width:1px;height:117px;background:#111"></div><div style="position:absolute;left:395px;top:198px;width:1px;height:117px;background:#111"></div><div style="position:absolute;left:513px;top:198px;width:1px;height:117px;background:#111"></div><div style="position:absolute;left:620px;top:198px;width:1px;height:117px;background:#111"></div><div style="position:absolute;left:713px;top:198px;width:1px;height:117px;background:#111"></div><div style="position:absolute;left:780px;top:198px;width:1px;height:117px;background:#111"></div><div style="position:absolute;left:-90.5px;top:194.92000000000002px;width:300px;height:29.2px;line-height:29.2px;text-align:center;font-family:'Liberation Serif', serif;font-size:14.6px;color:#111;font-weight:400;white-space:nowrap;letter-spacing:0px;-webkit-text-stroke:0.1px #111">STT</div><div style="position:absolute;left:1.5px;top:194.92000000000002px;width:300px;height:29.2px;line-height:29.2px;text-align:center;font-family:'Liberation Serif', serif;font-size:14.6px;color:#111;font-weight:400;white-space:nowrap;letter-spacing:0px;-webkit-text-stroke:0.1px #111">MÃ HÀNG HÓA</div><div style="position:absolute;left:304.0px;top:194.92000000000002px;width:300px;height:29.2px;line-height:29.2px;text-align:center;font-family:'Liberation Serif', serif;font-size:14.6px;color:#111;font-weight:400;white-space:nowrap;letter-spacing:0px;-webkit-text-stroke:0.1px #111">ĐƠN GIÁ</div><div style="position:absolute;left:416.5px;top:194.92000000000002px;width:300px;height:29.2px;line-height:29.2px;text-align:center;font-family:'Liberation Serif', serif;font-size:14.6px;color:#111;font-weight:400;white-space:nowrap;letter-spacing:0px;-webkit-text-stroke:0.1px #111">SỐ LƯỢNG</div><div style="position:absolute;left:516.5px;top:194.92000000000002px;width:300px;height:29.2px;line-height:29.2px;text-align:center;font-family:'Liberation Serif', serif;font-size:14.6px;color:#111;font-weight:400;white-space:nowrap;letter-spacing:0px;-webkit-text-stroke:0.1px #111">TỔNG TIỀN</div><div style="position:absolute;left:596.5px;top:194.92000000000002px;width:300px;height:29.2px;line-height:29.2px;text-align:center;font-family:'Liberation Serif', serif;font-size:14.6px;color:#111;font-weight:400;white-space:nowrap;letter-spacing:0px;-webkit-text-stroke:0.1px #111">GHI CHÚ</div><div style="position:absolute;left:-209.5px;width:300px;text-align:right;top:214.82px;height:29.2px;line-height:29.2px;font-family:'Liberation Serif', serif;font-size:14.6px;color:#111;font-weight:400;white-space:nowrap;letter-spacing:0px;-webkit-text-stroke:0.1px #111">1</div><div style="position:absolute;left:-209.5px;width:300px;text-align:right;top:234.38px;height:29.2px;line-height:29.2px;font-family:'Liberation Serif', serif;font-size:14.6px;color:#111;font-weight:400;white-space:nowrap;letter-spacing:0px;-webkit-text-stroke:0.1px #111">2</div><div style="position:absolute;left:-209.5px;width:300px;text-align:right;top:253.94000000000003px;height:29.2px;line-height:29.2px;font-family:'Liberation Serif', serif;font-size:14.6px;color:#111;font-weight:400;white-space:nowrap;letter-spacing:0px;-webkit-text-stroke:0.1px #111">3</div><div style="position:absolute;left:-209.5px;width:300px;text-align:right;top:273.5px;height:29.2px;line-height:29.2px;font-family:'Liberation Serif', serif;font-size:14.6px;color:#111;font-weight:400;white-space:nowrap;letter-spacing:0px;-webkit-text-stroke:0.1px #111">4</div><div style="position:absolute;left:-209.5px;width:300px;text-align:right;top:293.06px;height:29.2px;line-height:29.2px;font-family:'Liberation Serif', serif;font-size:14.6px;color:#111;font-weight:400;white-space:nowrap;letter-spacing:0px;-webkit-text-stroke:0.1px #111">5</div><div style="position:absolute;left:180.5px;width:300px;text-align:right;top:164px;height:30px;line-height:30px;font-family:'Liberation Serif', serif;font-size:15px;color:#111;font-weight:400;white-space:nowrap;letter-spacing:0px;-webkit-text-stroke:0.2px #111">BẢNG DOANH THU</div><div style="position:absolute;left:27px;top:160px;width:755px;height:38px;border:1px solid #111;border-left-width:1.5px;border-right:3px solid #111;box-sizing:border-box"></div><div style="position:absolute;left:779px;top:196px;width:4px;height:4px;background:#111;outline:1px solid #fff"></div><div style="position:absolute;left:223px;top:530px;width:179.5px;height:4px;background:linear-gradient(rgba(200,120,120,.35),rgba(255,255,255,0))"></div><div style="position:absolute;left:220px;top:95px;width:179.5px;height:435px;background:#fff;border:3px solid #b61a1d;box-sizing:border-box"></div><div style="position:absolute;left:380px;top:98px;width:14px;height:409px;background:linear-gradient(90deg,#f6f7f8,#eceef1);border-left:1px solid #cfd3d8;border-right:1px solid #dde0e4;box-sizing:border-box"></div><div style="position:absolute;left:380px;top:113px;width:14px;height:1px;background:#cfd3d8"></div><svg style="position:absolute;left:383px;top:103px" width="9" height="6" viewBox="0 0 9 6"><path d="M0.5 5 L4.5 0.5 L8.5 5 Z" fill="#3f4652"/></svg><div style="position:absolute;left:381px;top:114px;width:12px;height:88px;background:linear-gradient(90deg,#f1f3f5,#e3e6ea);border:1px solid #c7ccd3;box-sizing:border-box;border-radius:1px"></div><svg style="position:absolute;left:384px;top:154px" width="7" height="6" viewBox="0 0 7 6"><path d="M0 0.5 H7 M0 2.5 H7 M0 4.5 H7" stroke="#7c838c"/></svg><div style="position:absolute;left:380px;top:491px;width:14px;height:15px;background:linear-gradient(#fbfcfd,#e3e6ea);border:1px solid #b6bcc4;box-sizing:border-box"></div><svg style="position:absolute;left:383px;top:496px" width="9" height="6" viewBox="0 0 9 6"><path d="M0.5 0.5 L4.5 5 L8.5 0.5 Z" fill="#3f4652"/></svg><div style="position:absolute;left:223px;top:507px;width:172px;height:1px;background:#dfe2e6"></div><div style="position:absolute;left:245px;top:508px;width:1px;height:20px;background:#e6e8eb"></div><div style="position:absolute;left:253.5px;top:508.0px;height:21.0px;line-height:21.0px;font-family:'Liberation Sans', sans-serif;font-size:10.5px;color:#333;font-weight:400;white-space:nowrap;letter-spacing:0px;transform:scaleX(0.97);transform-origin:0 50%"><u>M</u>ore Paper Sizes...</div><div style="position:absolute;left:224px;top:345px;width:37px;height:37px;background:linear-gradient(#fdf0c6,#fbe6a6);border:1px solid #e5c46a;border-radius:2px;box-sizing:border-box"></div><div style="position:absolute;left:271.5px;top:95.5px;height:21.0px;line-height:21.0px;font-family:'Liberation Sans', sans-serif;font-size:10.5px;color:#333;font-weight:700;white-space:nowrap;letter-spacing:0px;transform:scaleX(0.94);transform-origin:0 50%">Letter</div><div style="position:absolute;left:271.5px;top:110.0px;height:21.0px;line-height:21.0px;font-family:'Liberation Sans', sans-serif;font-size:10.5px;color:#333;font-weight:400;white-space:nowrap;letter-spacing:0px;transform:scaleX(0.885);transform-origin:0 50%;word-spacing:1.5px">21.59 cm x 27.94 cm</div><svg style="position:absolute;left:234px;top:107px" width="19" height="22" viewBox="0 0 19 22"><rect x="0.5" y="0.5" width="16" height="19" fill="url(#pg)" stroke="#7d8288"/><path d="M1 20.5 H17.5 V1" stroke="#d6d9dd" fill="none"/></svg><div style="position:absolute;left:271.5px;top:136.4px;height:21.0px;line-height:21.0px;font-family:'Liberation Sans', sans-serif;font-size:10.5px;color:#333;font-weight:700;white-space:nowrap;letter-spacing:0px;transform:scaleX(0.94);transform-origin:0 50%">Tabloid</div><div style="position:absolute;left:271.5px;top:150.9px;height:21.0px;line-height:21.0px;font-family:'Liberation Sans', sans-serif;font-size:10.5px;color:#333;font-weight:400;white-space:nowrap;letter-spacing:0px;transform:scaleX(0.885);transform-origin:0 50%;word-spacing:1.5px">27.94 cm x 43.18 cm</div><svg style="position:absolute;left:233px;top:144px" width="20" height="29" viewBox="0 0 20 29"><rect x="0.5" y="0.5" width="17" height="26" fill="url(#pg)" stroke="#7d8288"/><path d="M1 27.5 H18.5 V1" stroke="#d6d9dd" fill="none"/></svg><div style="position:absolute;left:271.5px;top:177.3px;height:21.0px;line-height:21.0px;font-family:'Liberation Sans', sans-serif;font-size:10.5px;color:#333;font-weight:700;white-space:nowrap;letter-spacing:0px;transform:scaleX(0.94);transform-origin:0 50%">Ledger</div><div style="position:absolute;left:271.5px;top:191.8px;height:21.0px;line-height:21.0px;font-family:'Liberation Sans', sans-serif;font-size:10.5px;color:#333;font-weight:400;white-space:nowrap;letter-spacing:0px;transform:scaleX(0.885);transform-origin:0 50%;word-spacing:1.5px">43.18 cm x 27.94 cm</div><div style="position:absolute;left:271.5px;top:218.2px;height:21.0px;line-height:21.0px;font-family:'Liberation Sans', sans-serif;font-size:10.5px;color:#333;font-weight:700;white-space:nowrap;letter-spacing:0px;transform:scaleX(0.94);transform-origin:0 50%">Legal</div><div style="position:absolute;left:271.5px;top:232.7px;height:21.0px;line-height:21.0px;font-family:'Liberation Sans', sans-serif;font-size:10.5px;color:#333;font-weight:400;white-space:nowrap;letter-spacing:0px;transform:scaleX(0.885);transform-origin:0 50%;word-spacing:1.5px">21.59 cm x 35.56 cm</div><svg style="position:absolute;left:234px;top:229px" width="18" height="26" viewBox="0 0 18 26"><rect x="0.5" y="0.5" width="15" height="23" fill="url(#pg)" stroke="#7d8288"/><path d="M1 24.5 H16.5 V1" stroke="#d6d9dd" fill="none"/></svg><div style="position:absolute;left:271.5px;top:259.1px;height:21.0px;line-height:21.0px;font-family:'Liberation Sans', sans-serif;font-size:10.5px;color:#333;font-weight:700;white-space:nowrap;letter-spacing:0px;transform:scaleX(0.94);transform-origin:0 50%">Executive</div><div style="position:absolute;left:271.5px;top:273.6px;height:21.0px;line-height:21.0px;font-family:'Liberation Sans', sans-serif;font-size:10.5px;color:#333;font-weight:400;white-space:nowrap;letter-spacing:0px;transform:scaleX(0.885);transform-origin:0 50%;word-spacing:1.5px">18.41 cm x 26.67 cm</div><svg style="position:absolute;left:235px;top:271px" width="17" height="23" viewBox="0 0 17 23"><rect x="0.5" y="0.5" width="14" height="20" fill="url(#pg)" stroke="#7d8288"/><path d="M1 21.5 H15.5 V1" stroke="#d6d9dd" fill="none"/></svg><div style="position:absolute;left:271.5px;top:300.0px;height:21.0px;line-height:21.0px;font-family:'Liberation Sans', sans-serif;font-size:10.5px;color:#333;font-weight:700;white-space:nowrap;letter-spacing:0px;transform:scaleX(0.94);transform-origin:0 50%">A3</div><div style="position:absolute;left:271.5px;top:314.5px;height:21.0px;line-height:21.0px;font-family:'Liberation Sans', sans-serif;font-size:10.5px;color:#333;font-weight:400;white-space:nowrap;letter-spacing:0px;transform:scaleX(0.885);transform-origin:0 50%;word-spacing:1.5px">29.7 cm x 42 cm</div><svg style="position:absolute;left:233px;top:308px" width="21" height="29" viewBox="0 0 21 29"><rect x="0.5" y="0.5" width="18" height="26" fill="url(#pg)" stroke="#7d8288"/><path d="M1 27.5 H19.5 V1" stroke="#d6d9dd" fill="none"/></svg><div style="position:absolute;left:271.5px;top:340.9px;height:21.0px;line-height:21.0px;font-family:'Liberation Sans', sans-serif;font-size:10.5px;color:#333;font-weight:700;white-space:nowrap;letter-spacing:0px;transform:scaleX(0.94);transform-origin:0 50%">A4</div><div style="position:absolute;left:271.5px;top:355.4px;height:21.0px;line-height:21.0px;font-family:'Liberation Sans', sans-serif;font-size:10.5px;color:#333;font-weight:400;white-space:nowrap;letter-spacing:0px;transform:scaleX(0.885);transform-origin:0 50%;word-spacing:1.5px">21 cm x 29.7 cm</div><svg style="position:absolute;left:234px;top:352px" width="18" height="23" viewBox="0 0 18 23"><rect x="0.5" y="0.5" width="15" height="20" fill="url(#pg)" stroke="#7d8288"/><path d="M1 21.5 H16.5 V1" stroke="#d6d9dd" fill="none"/></svg><div style="position:absolute;left:271.5px;top:381.8px;height:21.0px;line-height:21.0px;font-family:'Liberation Sans', sans-serif;font-size:10.5px;color:#333;font-weight:700;white-space:nowrap;letter-spacing:0px;transform:scaleX(0.94);transform-origin:0 50%">A2</div><div style="position:absolute;left:271.5px;top:396.3px;height:21.0px;line-height:21.0px;font-family:'Liberation Sans', sans-serif;font-size:10.5px;color:#333;font-weight:400;white-space:nowrap;letter-spacing:0px;transform:scaleX(0.885);transform-origin:0 50%;word-spacing:1.5px">42 cm x 59.4 cm</div><div style="position:absolute;left:271.5px;top:422.7px;height:21.0px;line-height:21.0px;font-family:'Liberation Sans', sans-serif;font-size:10.5px;color:#333;font-weight:700;white-space:nowrap;letter-spacing:0px;transform:scaleX(0.94);transform-origin:0 50%">11x17</div><div style="position:absolute;left:271.5px;top:437.2px;height:21.0px;line-height:21.0px;font-family:'Liberation Sans', sans-serif;font-size:10.5px;color:#333;font-weight:400;white-space:nowrap;letter-spacing:0px;transform:scaleX(0.885);transform-origin:0 50%;word-spacing:1.5px">27.94 cm x 43.18 cm</div><div style="position:absolute;left:271.5px;top:463.59999999999997px;height:21.0px;line-height:21.0px;font-family:'Liberation Sans', sans-serif;font-size:10.5px;color:#333;font-weight:700;white-space:nowrap;letter-spacing:0px;transform:scaleX(0.94);transform-origin:0 50%">Screen</div><div style="position:absolute;left:271.5px;top:478.09999999999997px;height:21.0px;line-height:21.0px;font-family:'Liberation Sans', sans-serif;font-size:10.5px;color:#333;font-weight:400;white-space:nowrap;letter-spacing:0px;transform:scaleX(0.885);transform-origin:0 50%;word-spacing:1.5px">16.51 cm x 13.15 cm</div><div style="position:absolute;left:220px;top:92px;width:40px;height:3px;background:#fbd9a5"></div><div style="position:absolute;left:220px;top:31px;width:40px;height:61.5px;background:linear-gradient(#fde59a,#fcd66f 35%,#fbcd5f);border:3px solid #b61a1d;box-sizing:border-box"></div><svg style="position:absolute;left:225px;top:37px" width="30" height="30" viewBox="0 0 30 30"><path d="M8 3 H25" stroke="#4f4632"/><path d="M8 1 V5 M25 1 V5" stroke="#4f4632"/><path d="M4.5 7 V26" stroke="#4f4632"/><path d="M2.5 7 H6.5 M2.5 26 H6.5" stroke="#4f4632"/><path d="M8.5 7.5 H20 L24.5 12 V26.5 H8.5 Z" fill="#fafbfd" stroke="#8a8070"/><path d="M20 7.5 V12 H24.5" fill="#e5e8ec" stroke="#8a8070"/></svg><div style="position:absolute;left:89.5px;top:66.7px;width:300px;height:19.6px;line-height:19.6px;text-align:center;font-family:'Liberation Sans', sans-serif;font-size:9.8px;color:#262626;font-weight:400;white-space:nowrap;letter-spacing:0.5px;">Size</div><svg style="position:absolute;left:237px;top:86px" width="6" height="4" viewBox="0 0 6 4"><path d="M0 0 L5 0 L2.5 3 Z" fill="#6a5a32"/></svg>
</div>
</body></html>
